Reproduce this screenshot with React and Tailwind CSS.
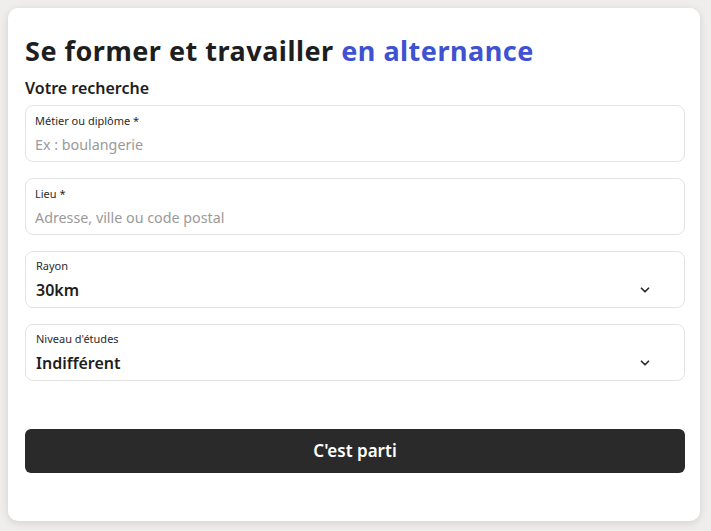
import { ChevronDown } from 'lucide-react';

const font = { fontFamily: '"Noto Sans", "Liberation Sans", sans-serif' };

function TextField({ label, placeholder }) {
  return (
    <label className="block h-[57px] rounded-lg border border-[#e3e3e3] bg-white px-[9px] pt-[7px]">
      <div className="text-[11px] leading-[16px] text-[#2a2a2a]">{label}</div>
      <input
        className="mt-[6px] block w-full bg-transparent text-[14.3px] leading-[20px] text-[#2a2a2a] placeholder:text-[#9a9a9a] focus:outline-none"
        placeholder={placeholder}
        style={font}
      />
    </label>
  );
}

function SelectField({ label, value }) {
  return (
    <div className="flex h-[57px] items-end justify-between rounded-lg border border-[#e3e3e3] bg-white px-[10px] pb-[5px]">
      <div>
        <div className="text-[11px] leading-[16px] text-[#2a2a2a]">{label}</div>
        <div className="mt-[4px] text-[16px] font-semibold leading-[24px] text-[#1e1e1e]">{value}</div>
      </div>
      <ChevronDown className="mb-[5px] mr-[22px] h-[14px] w-[14px] text-[#2a2a2a]" strokeWidth={3} />
    </div>
  );
}

export default function App() {
  return (
    <div className="min-h-[531px] bg-[#efeeed] p-2" style={font}>
      <div className="h-[513px] w-[692px] rounded-[10px] bg-white pl-[17px] pr-[15px] pt-[28px] shadow-[0_2px_8px_rgba(0,0,0,0.12)]">
        <h1 className="text-[27px] font-bold leading-[30px] tracking-[0.5px] text-[#1e1e1e]">
          Se former et travailler <span className="text-[#3f52d1]">en alternance</span>
        </h1>
        <div className="mt-[11px] text-[16px] font-semibold leading-[22px] text-[#1e1e1e]">Votre recherche</div>

        <div className="mt-[6px] flex flex-col gap-[16px]">
          <TextField label="Métier ou diplôme *" placeholder="Ex : boulangerie" />
          <TextField label="Lieu *" placeholder="Adresse, ville ou code postal" />
          <SelectField label="Rayon" value="30km" />
          <SelectField label="Niveau d'études" value="Indifférent" />
        </div>

        <button className="mt-[48px] h-[44px] w-full rounded-md bg-[#2a2a2a] text-[17px] font-semibold text-white">
          C'est parti
        </button>
      </div>
    </div>
  );
}
